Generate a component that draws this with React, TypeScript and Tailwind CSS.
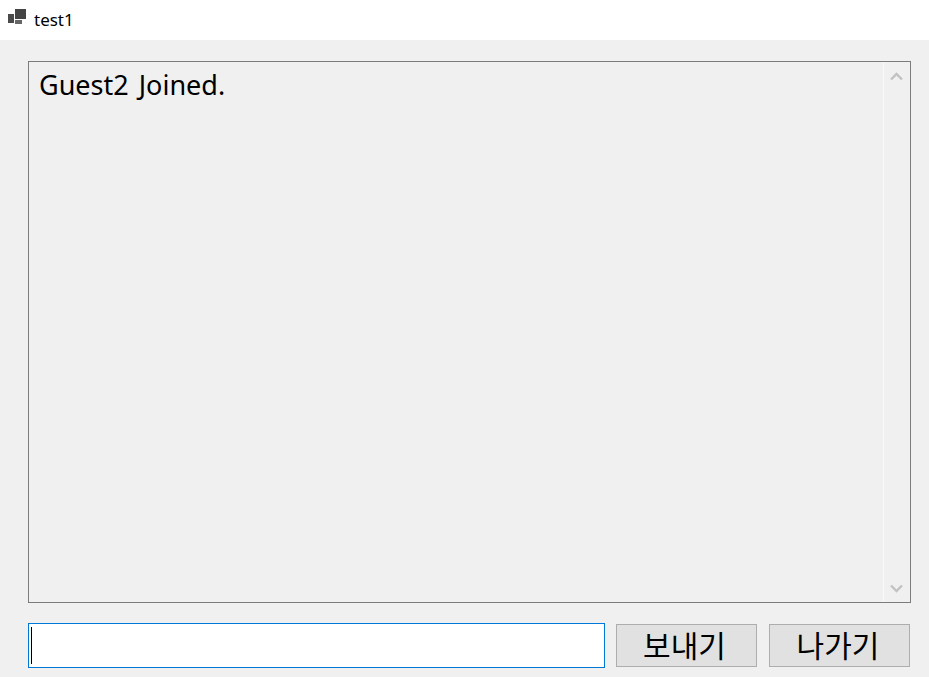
export default function App() {
  const font = "font-['Noto_Sans','Noto_Sans_CJK_KR',sans-serif]";
  return (
    <div className={`w-[929px] h-[677px] bg-[#f0f0f0] flex flex-col overflow-hidden ${font} text-black`}>
      <div className="h-10 bg-white flex items-center shrink-0 pl-2 gap-[7px]">
        <svg width="19" height="18" viewBox="0 0 19 18" className="-mt-1 shrink-0">
          <rect x="0" y="5" width="6" height="9" fill="#4a4a4a" />
          <rect x="7" y="0" width="11" height="10" fill="#444" />
          <rect x="7" y="11" width="7" height="4" fill="#666" />
        </svg>
        <span className="text-[17px] leading-none -mt-0.5">test1</span>
      </div>
      <div className="flex-1 flex flex-col pl-7 pr-[18px] pt-[21px]">
        <div className="h-[542px] border border-[#7c7c7c] flex">
          <div className="flex-1 pl-2.5 pt-[7px] text-[27px] leading-[32px] [word-spacing:3px]">Guest2 Joined.</div>
          <div className="w-[27px] border-l border-[#f9f9f9] flex flex-col justify-between items-center py-2.5 pr-px">
            <svg width="13" height="9" viewBox="0 0 13 9"><path d="M1 7.5 6.5 2 12 7.5" fill="none" stroke="#c2c2c2" strokeWidth="2.4" /></svg>
            <svg width="13" height="9" viewBox="0 0 13 9" className="translate-y-px"><path d="M1 1.5 6.5 7 12 1.5" fill="none" stroke="#c2c2c2" strokeWidth="2.4" /></svg>
          </div>
        </div>
        <div className="flex items-center mt-5 h-[45px]">
          <div className="w-[577px] h-[45px] bg-white border border-[#0078d7] pl-0.5 py-0.5 flex items-stretch">
            <div className="w-px bg-black my-px" />
          </div>
          <button className="ml-[11px] w-[141px] h-[43px] bg-[#e1e1e1] border border-[#adadad] text-[30px] leading-none flex items-center justify-center pr-1">보내기</button>
          <button className="ml-3 w-[141px] h-[43px] bg-[#e1e1e1] border border-[#adadad] text-[30px] leading-none flex items-center justify-center pr-[3px]">나가기</button>
        </div>
      </div>
    </div>
  );
}
